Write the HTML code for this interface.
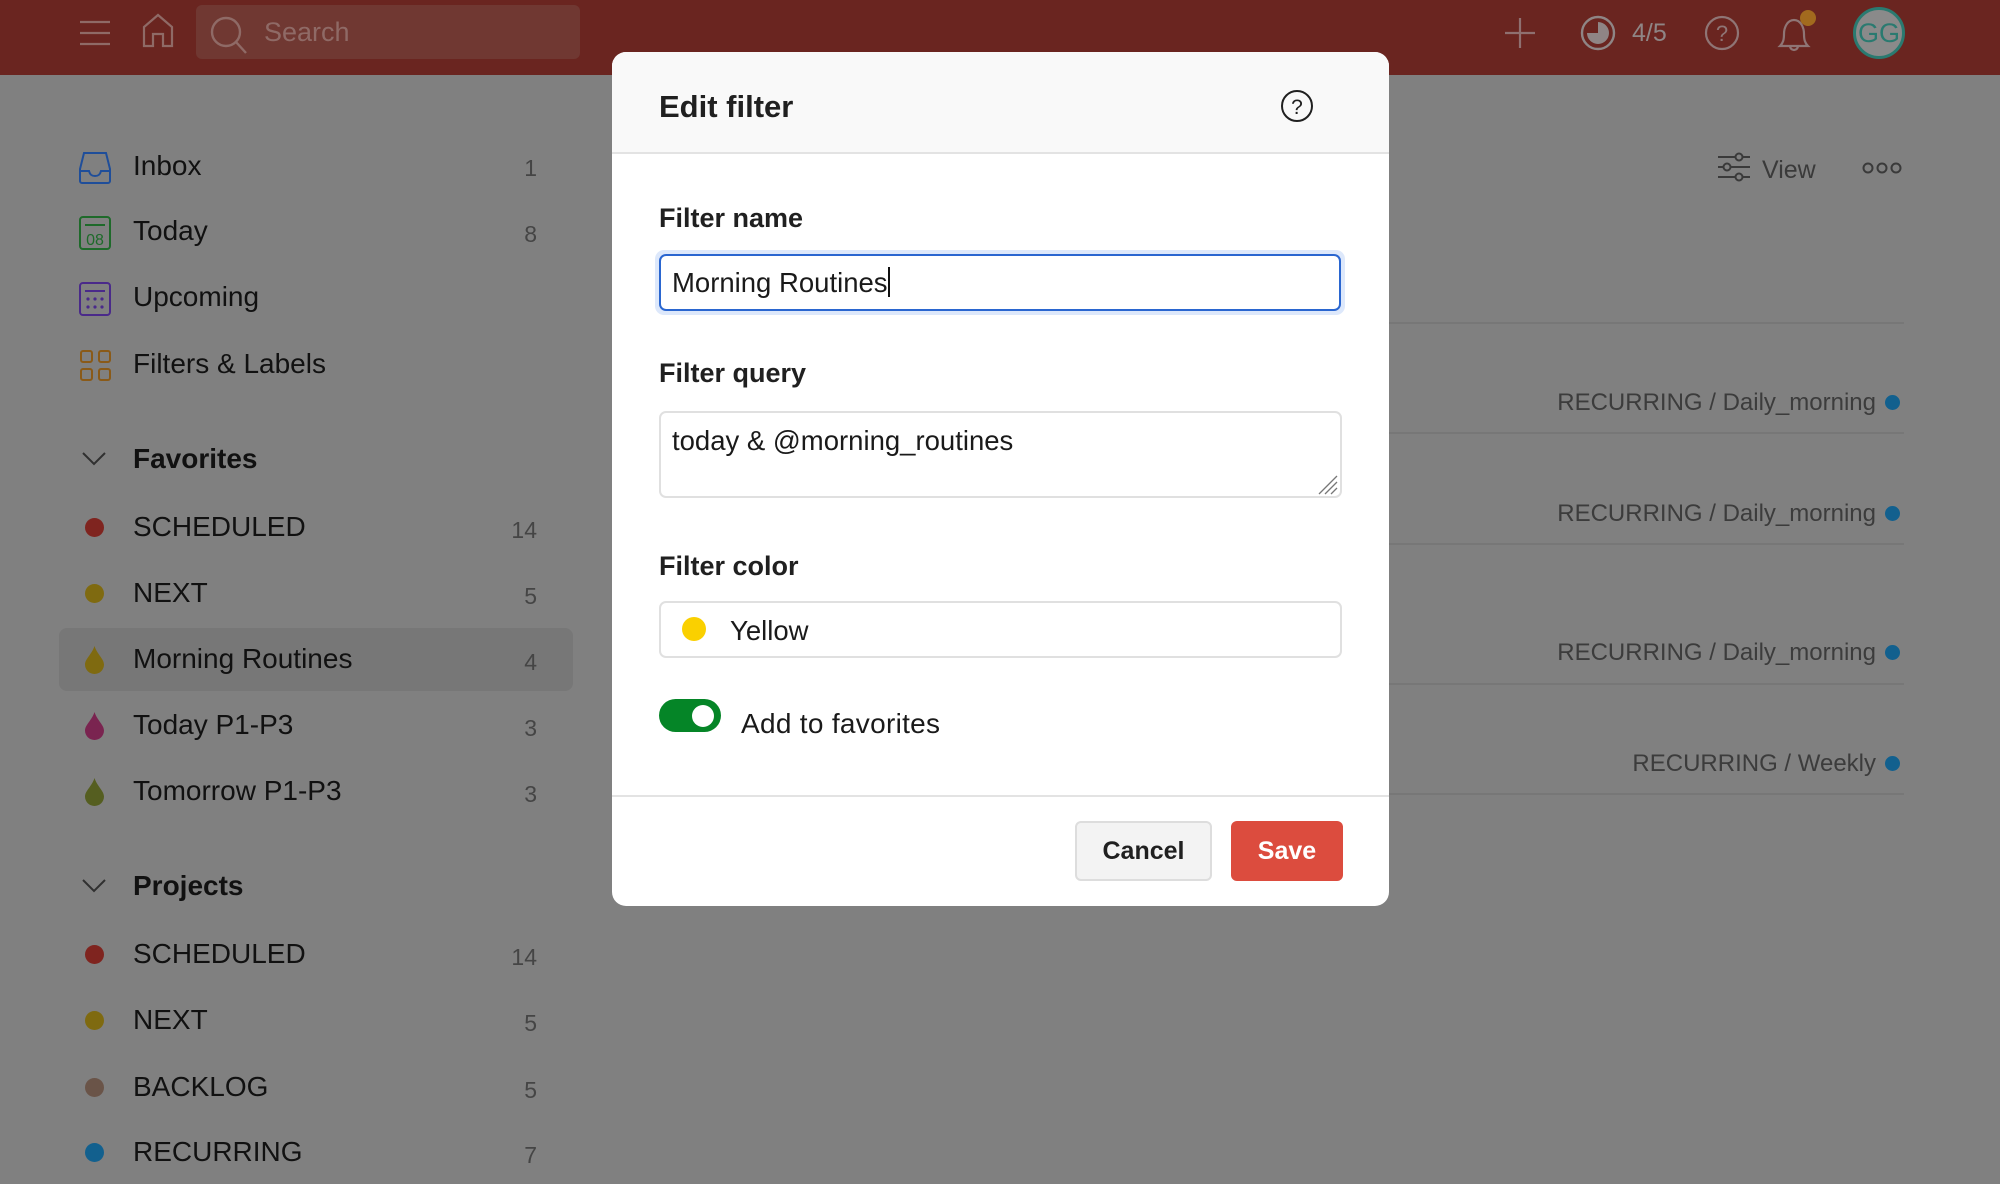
<!DOCTYPE html>
<html><head><meta charset="utf-8"><style>
*{margin:0;padding:0;box-sizing:border-box}
body{width:2000px;height:1184px;overflow:hidden;background:#808080;font-family:"Liberation Sans",sans-serif;position:relative;color:#151515}
.top{position:absolute;left:0;top:0;width:2000px;height:75px;background:#6a2520}
.abs{position:absolute}
.search{left:196px;top:5px;width:384px;height:54px;background:#703832;border-radius:6px}
.si{left:133px;font-size:28px;white-space:nowrap;color:#111}
.cnt{position:absolute;right:1463px;font-size:23px;color:#454545;text-align:right}
.dot{position:absolute;left:85px;width:19px;height:19px;border-radius:50%}
.hd{font-weight:bold;font-size:28px}
.rl{position:absolute;right:124px;font-size:24px;color:#3c3c3c;white-space:nowrap}
.bd{position:absolute;right:100px;width:15px;height:15px;border-radius:50%;background:#12608e}
.hl{position:absolute;left:1389px;width:515px;height:2px;background:#777}
.modal{position:absolute;left:612px;top:52px;width:777px;height:854px;background:#fff;border-radius:14px;overflow:hidden}
.mh{height:102px;background:#f9f9f9;border-bottom:2px solid #e3e3e3}
.lbl{position:absolute;left:47px;font-weight:bold;font-size:27px;color:#202020}
</style></head><body>
<div class="top"></div>
<svg class="abs" style="left:78px;top:16px" width="34" height="34" viewBox="0 0 34 34" fill="none" stroke="#8f6a66" stroke-width="2.2"><path d="M2 6h30M2 17h30M2 28h30"/></svg>
<svg class="abs" style="left:140px;top:12px" width="36" height="36" viewBox="0 0 36 36" fill="none" stroke="#8f6a66" stroke-width="2.2"><path d="M4 34V15L18 3l14 12v19h-9V22h-10v12z"/></svg>
<div class="abs search"></div>
<svg class="abs" style="left:208px;top:14px" width="44" height="44" viewBox="0 0 44 44" fill="none" stroke="#8f6a66" stroke-width="2.4"><circle cx="18" cy="18" r="14"/><path d="M28 28l10 11"/></svg>
<div class="abs" style="left:264px;top:17px;font-size:27px;color:#8f6a66">Search</div>
<svg class="abs" style="left:1504px;top:16px" width="32" height="34" viewBox="0 0 32 34" fill="none" stroke="#8f7070" stroke-width="2.2"><path d="M16 2v30M1 17h30"/></svg>
<svg class="abs" style="left:1580px;top:15px" width="36" height="36" viewBox="0 0 36 36"><circle cx="18" cy="18" r="16" fill="none" stroke="#8f8585" stroke-width="2.4"/><path d="M18 18V7a11 11 0 1 1-11 11z" fill="#8f8585"/></svg>
<div class="abs" style="left:1632px;top:19px;font-size:25px;color:#8f8585">4/5</div>
<svg class="abs" style="left:1704px;top:15px" width="36" height="36" viewBox="0 0 36 36" fill="none" stroke="#8f7575" stroke-width="2.2"><circle cx="18" cy="18" r="16"/><text x="18" y="26" text-anchor="middle" font-size="22" fill="#8f7575" stroke="none" font-family="Liberation Sans">?</text></svg>
<svg class="abs" style="left:1776px;top:12px" width="36" height="42" viewBox="0 0 36 42" fill="none" stroke="#8f7575" stroke-width="2.2"><path d="M4 34h28c-3-3-4-6-4-12s-3-14-10-14S8 16 8 22s-1 9-4 12zM14 34a4 4 0 0 0 8 0"/></svg>
<div class="abs" style="left:1800px;top:10px;width:16px;height:16px;border-radius:50%;background:#a26a1e"></div>
<div class="abs" style="left:1853px;top:7px;width:52px;height:52px;border-radius:50%;background:#8a8a8a;border:3px solid #2a7a70;color:#2a7a70;font-size:27px;text-align:center;line-height:46px">GG</div>

<!-- sidebar -->
<svg class="abs" style="left:79px;top:151px" width="32" height="34" viewBox="0 0 32 34" fill="none" stroke="#1f4e9a" stroke-width="2"><path d="M5 2h22l4 16v12a2 2 0 0 1-2 2H3a2 2 0 0 1-2-2V18z M1 20h9c1 4 3 5 6 5s5-1 6-5h9"/></svg>
<div class="abs si" style="top:150px">Inbox</div><div class="cnt" style="top:155px">1</div>
<svg class="abs" style="left:79px;top:216px" width="32" height="34" viewBox="0 0 32 34" fill="none" stroke="#1e6a2a" stroke-width="2"><rect x="1" y="1" width="30" height="32" rx="3"/><path d="M6 9h20"/><text x="16" y="29" text-anchor="middle" font-size="16" fill="#1e6a2a" stroke="none" font-family="Liberation Sans">08</text></svg>
<div class="abs si" style="top:215px">Today</div><div class="cnt" style="top:221px">8</div>
<svg class="abs" style="left:79px;top:282px" width="32" height="34" viewBox="0 0 32 34" fill="none" stroke="#4a2a8a" stroke-width="2"><rect x="1" y="1" width="30" height="32" rx="3"/><path d="M6 9h20"/><g fill="#4a2a8a" stroke="none"><circle cx="9" cy="17" r="1.6"/><circle cx="16" cy="17" r="1.6"/><circle cx="23" cy="17" r="1.6"/><circle cx="9" cy="25" r="1.6"/><circle cx="16" cy="25" r="1.6"/><circle cx="23" cy="25" r="1.6"/></g></svg>
<div class="abs si" style="top:281px">Upcoming</div>
<svg class="abs" style="left:80px;top:350px" width="32" height="32" viewBox="0 0 32 32" fill="none" stroke="#8a5a18" stroke-width="2"><rect x="1" y="1" width="11" height="11" rx="2"/><rect x="19" y="1" width="11" height="11" rx="2"/><rect x="1" y="19" width="11" height="11" rx="2"/><rect x="19" y="19" width="11" height="11" rx="2"/></svg>
<div class="abs si" style="top:348px">Filters &amp; Labels</div>

<svg class="abs" style="left:82px;top:452px" width="24" height="14" viewBox="0 0 24 14" fill="none" stroke="#303030" stroke-width="2"><path d="M1 1l11 11L23 1"/></svg>
<div class="abs si hd" style="top:443px">Favorites</div>
<div class="abs" style="left:59px;top:628px;width:514px;height:63px;background:#777;border-radius:8px"></div>
<div class="dot" style="top:518px;background:#7f241f"></div>
<div class="abs si" style="top:511px">SCHEDULED</div><div class="cnt" style="top:517px">14</div>
<div class="dot" style="top:584px;background:#7f6a10"></div>
<div class="abs si" style="top:577px">NEXT</div><div class="cnt" style="top:583px">5</div>
<svg class="abs" style="left:85px;top:646px" width="19" height="28" viewBox="0 0 19 28"><path d="M9.5 0C7 8 0 13 0 18.5a9.5 9.5 0 0 0 19 0C19 13 12 8 9.5 0z" fill="#7f6a10"/></svg>
<div class="abs si" style="top:643px">Morning Routines</div><div class="cnt" style="top:649px">4</div>
<svg class="abs" style="left:85px;top:712px" width="19" height="28" viewBox="0 0 19 28"><path d="M9.5 0C7 8 0 13 0 18.5a9.5 9.5 0 0 0 19 0C19 13 12 8 9.5 0z" fill="#7a2450"/></svg>
<div class="abs si" style="top:709px">Today P1-P3</div><div class="cnt" style="top:715px">3</div>
<svg class="abs" style="left:85px;top:778px" width="19" height="28" viewBox="0 0 19 28"><path d="M9.5 0C7 8 0 13 0 18.5a9.5 9.5 0 0 0 19 0C19 13 12 8 9.5 0z" fill="#555e20"/></svg>
<div class="abs si" style="top:775px">Tomorrow P1-P3</div><div class="cnt" style="top:781px">3</div>

<svg class="abs" style="left:82px;top:879px" width="24" height="14" viewBox="0 0 24 14" fill="none" stroke="#303030" stroke-width="2"><path d="M1 1l11 11L23 1"/></svg>
<div class="abs si hd" style="top:870px">Projects</div>
<div class="dot" style="top:945px;background:#7f241f"></div>
<div class="abs si" style="top:938px">SCHEDULED</div><div class="cnt" style="top:944px">14</div>
<div class="dot" style="top:1011px;background:#7f6a10"></div>
<div class="abs si" style="top:1004px">NEXT</div><div class="cnt" style="top:1010px">5</div>
<div class="dot" style="top:1078px;background:#6a5448"></div>
<div class="abs si" style="top:1071px">BACKLOG</div><div class="cnt" style="top:1077px">5</div>
<div class="dot" style="top:1143px;background:#12608e"></div>
<div class="abs si" style="top:1136px">RECURRING</div><div class="cnt" style="top:1142px">7</div>

<!-- right content -->
<svg class="abs" style="left:1717px;top:152px" width="34" height="30" viewBox="0 0 34 30" fill="none" stroke="#3a3a3a" stroke-width="2"><path d="M1 5h32M1 15h32M1 25h32"/><circle cx="22" cy="5" r="3.5" fill="#808080"/><circle cx="10" cy="15" r="3.5" fill="#808080"/><circle cx="22" cy="25" r="3.5" fill="#808080"/></svg>
<div class="abs" style="left:1762px;top:156px;font-size:25px;color:#3a3a3a">View</div>
<svg class="abs" style="left:1862px;top:161px" width="40" height="14" viewBox="0 0 40 14" fill="none" stroke="#3a3a3a" stroke-width="2"><circle cx="6" cy="7" r="4.5"/><circle cx="20" cy="7" r="4.5"/><circle cx="34" cy="7" r="4.5"/></svg>
<div class="hl" style="top:322px"></div>
<div class="rl" style="top:389px">RECURRING / Daily_morning</div><div class="bd" style="top:395px"></div>
<div class="hl" style="top:432px"></div>
<div class="rl" style="top:500px">RECURRING / Daily_morning</div><div class="bd" style="top:506px"></div>
<div class="hl" style="top:543px"></div>
<div class="rl" style="top:639px">RECURRING / Daily_morning</div><div class="bd" style="top:645px"></div>
<div class="hl" style="top:683px"></div>
<div class="rl" style="top:750px">RECURRING / Weekly</div><div class="bd" style="top:756px"></div>
<div class="hl" style="top:793px"></div>

<!-- modal -->
<div class="modal">
 <div class="mh"></div>
 <div class="abs" style="left:47px;top:37px;font-size:31px;font-weight:bold;color:#202020">Edit filter</div>
 <svg class="abs" style="left:668px;top:37px" width="34" height="34" viewBox="0 0 34 34" fill="none" stroke="#202020" stroke-width="2"><circle cx="17" cy="17" r="15"/><text x="17" y="25" text-anchor="middle" font-size="21" fill="#202020" stroke="none" font-family="Liberation Sans">?</text></svg>
 <div class="lbl" style="top:151px">Filter name</div>
 <div class="abs" style="left:43px;top:198px;width:690px;height:65px;border-radius:9px;background:#dde8fb"></div>
 <div class="abs" style="left:47px;top:202px;width:682px;height:57px;border:2px solid #2a66d0;border-radius:7px;background:#fff"></div>
 <div class="abs" style="left:60px;top:215px;font-size:27.5px;color:#1a1a1a">Morning Routines<span style="display:inline-block;width:2px;height:30px;background:#111;vertical-align:-5px"></span></div>
 <div class="lbl" style="top:306px">Filter query</div>
 <div class="abs" style="left:47px;top:359px;width:683px;height:87px;border:2px solid #e0e0e0;border-radius:7px"></div>
 <div class="abs" style="left:60px;top:373px;font-size:27.5px;color:#1a1a1a">today &amp; @morning_routines</div>
 <svg class="abs" style="left:705px;top:422px" width="22" height="22" viewBox="0 0 22 22" stroke="#777" stroke-width="1.3"><path d="M2 20L20 2M8 20L20 8M14 20l6-6"/></svg>
 <div class="lbl" style="top:499px">Filter color</div>
 <div class="abs" style="left:47px;top:549px;width:683px;height:57px;border:2px solid #e0e0e0;border-radius:7px"></div>
 <div class="abs" style="left:70px;top:565px;width:24px;height:24px;border-radius:50%;background:#fad000"></div>
 <div class="abs" style="left:118px;top:563px;font-size:27.5px;color:#1a1a1a">Yellow</div>
 <div class="abs" style="left:47px;top:647px;width:62px;height:33px;border-radius:17px;background:#058527"></div>
 <div class="abs" style="left:80px;top:653px;width:22px;height:22px;border-radius:50%;background:#fff"></div>
 <div class="abs" style="left:129px;top:656px;font-size:28px;color:#1a1a1a;letter-spacing:0.3px">Add to favorites</div>
 <div class="abs" style="left:0;top:743px;width:777px;height:2px;background:#e3e3e3"></div>
 <div class="abs" style="left:463px;top:769px;width:137px;height:60px;border:2px solid #ddd;border-radius:6px;background:#f3f3f3;font-weight:bold;font-size:25px;color:#202020;text-align:center;line-height:56px">Cancel</div>
 <div class="abs" style="left:619px;top:769px;width:112px;height:60px;border-radius:6px;background:#dc4c3e;font-weight:bold;font-size:25px;color:#fff;text-align:center;line-height:60px">Save</div>
</div>
</body></html>
